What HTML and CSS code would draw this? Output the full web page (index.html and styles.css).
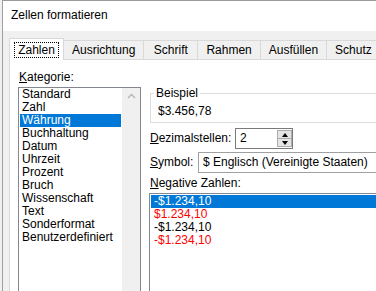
FILE: index.html
```html
<!DOCTYPE html>
<html lang="de">
<head>
  <meta charset="UTF-8" />
  <title>Zellen formatieren</title>
  <link rel="stylesheet" href="styles.css">
</head>
<body>
  <div class="dialog">
    <div class="titlebar">Zellen formatieren</div>

    <div class="dialog-body">
      <div class="tabs">
        <div class="tab active"><span class="focus">Zahlen</span></div>
        <div class="tab">Ausrichtung</div>
        <div class="tab">Schrift</div>
        <div class="tab">Rahmen</div>
        <div class="tab">Ausfüllen</div>
        <div class="tab">Schutz</div>
      </div>

      <div class="panel">
        <div class="category">
          <div class="label"><u>K</u>ategorie:</div>
          <div class="listbox cat-list">
            <ul class="items">
              <li>Standard</li>
              <li>Zahl</li>
              <li class="selected">Währung</li>
              <li>Buchhaltung</li>
              <li>Datum</li>
              <li>Uhrzeit</li>
              <li>Prozent</li>
              <li>Bruch</li>
              <li>Wissenschaft</li>
              <li>Text</li>
              <li>Sonderformat</li>
              <li>Benutzerdefiniert</li>
            </ul>
            <div class="scrollbar">
              <svg width="9" height="6" viewBox="0 0 9 6">
                <polyline points="1,5 4.5,1.5 8,5" fill="none" stroke="#b4b4b4" stroke-width="1.4" />
              </svg>
            </div>
          </div>
        </div>

        <div class="options">
          <fieldset class="sample">
            <legend>Beispiel</legend>
            <div class="sample-value">$3.456,78</div>
          </fieldset>

          <div class="field-row decimals">
            <label class="field-label"><u>D</u>ezimalstellen:</label>
            <div class="spin">
              <span class="spin-value">2</span>
              <span class="spin-buttons">
                <span class="spin-btn"><i class="arrow-up"></i></span>
                <span class="spin-btn"><i class="arrow-down"></i></span>
              </span>
            </div>
          </div>

          <div class="field-row symbol">
            <label class="field-label"><u>S</u>ymbol:</label>
            <div class="select">$ Englisch (Vereinigte Staaten)</div>
          </div>

          <div class="label neg-label"><u>N</u>egative Zahlen:</div>
          <ul class="listbox neg-list">
            <li class="selected">-$1.234,10</li>
            <li class="red">$1.234,10</li>
            <li>-$1.234,10</li>
            <li class="red">-$1.234,10</li>
          </ul>
        </div>
      </div>
    </div>
  </div>
</body>
</html>
```

FILE: styles.css
```css
/* Global */
body {
  margin: 0;
  background: #f0f0f0;
  font-family: "Liberation Sans", Arial, sans-serif;
  font-size: 12px;
  line-height: 15px;
  color: #000;
  overflow: hidden;
}

ul {
  list-style: none;
  margin: 0;
  padding: 0;
}

u {
  text-decoration: underline;
  text-underline-offset: 1px;
}

/* Window frame (the screenshot crops it on the right and bottom) */
.dialog {
  margin-left: 2px;
  width: 373px;
  height: 290px;
  overflow: hidden;
  border-left: 1px solid #a0a0a0;
  border-top: 1px solid #9a9a9a;
  background: #f0f0f0;
}

.titlebar {
  height: 30px;
  box-sizing: border-box;
  padding: 7px 0 0 8px;
  background: #fff;
}

.dialog-body {
  padding: 7px 0 0 6px;
}

/* Tabs */
.tabs {
  display: flex;
  align-items: flex-end;
}

.tab {
  flex-shrink: 0;
  min-width: 55px;
  box-sizing: border-box;
  margin-left: -1px;
  padding: 2px 8px 1px;
  border: 1px solid #d9d9d9;
  border-bottom: none;
  background: #f0f0f0;
  text-align: center;
  white-space: nowrap;
}

.tab:first-child {
  margin-left: 0;
}

.tab:last-child {
  min-width: 72px;
  text-align: left;
}

.tab.active {
  position: relative;
  z-index: 1;
  margin-bottom: -1px;
  padding: 4px 8px 2px;
  background: #fff;
}

.focus {
  padding: 0 3px;
  margin: 0 -3px;
  outline: 1px dotted #000;
}

/* Tab page */
.panel {
  display: flex;
  width: 420px;
  height: 260px;
  border: 1px solid #d9d9d9;
  background: #fff;
}

.category {
  padding: 10px 0 0 8px;
}

.label {
  padding-left: 1px;
}

.listbox {
  border: 1px solid #828790;
  background: #fff;
  line-height: 13px;
}

.cat-list {
  display: flex;
  width: 123px;
  height: 220px;
  box-sizing: border-box;
  margin-top: 2px;
}

.cat-list .items {
  flex: 1;
  padding: 0 1px;
}

.cat-list li {
  padding-left: 2px;
  white-space: nowrap;
}

.scrollbar {
  width: 18px;
  padding-top: 5px;
  display: flex;
  justify-content: center;
  align-items: flex-start;
  background: #f0f0f0;
}

.selected {
  background: #0078d7;
  color: #fff;
}

.red {
  color: #ff0000;
}

/* Right column */
.options {
  flex: 1;
  margin: 26px 0 0 9px;
}

.sample {
  margin: 0;
  min-width: 0;
  padding: 0 0 3px 3px;
  border: 1px solid #dcdcdc;
}

.sample legend {
  padding: 0 2px;
}

.sample-value {
  padding: 3px 0 0 4px;
}

.field-row {
  display: flex;
  align-items: center;
}

.decimals {
  margin-top: 5px;
}

.decimals .field-label {
  width: 85px;
}

.symbol {
  margin-top: 3px;
}

.symbol .field-label {
  width: 48px;
}

.spin {
  display: flex;
  width: 58px;
  height: 21px;
  box-sizing: border-box;
  border: 1px solid #7a7a7a;
  background: #fff;
}

.spin-value {
  flex: 1;
  padding-left: 4px;
  line-height: 19px;
}

.spin-buttons {
  display: flex;
  flex-direction: column;
  width: 15px;
  margin: 1px 0 1px;
}

.spin-btn {
  flex: 1;
  display: flex;
  align-items: center;
  justify-content: center;
  border: 1px solid #adadad;
  background: #e5e5e5;
}

.spin-btn + .spin-btn {
  border-top: none;
}

.arrow-up,
.arrow-down {
  width: 0;
  height: 0;
  border-left: 3px solid transparent;
  border-right: 3px solid transparent;
}

.arrow-up {
  border-bottom: 4px solid #000;
}

.arrow-down {
  border-top: 4px solid #000;
}

.select {
  flex: 1;
  height: 21px;
  box-sizing: border-box;
  padding-left: 4px;
  border: 1px solid #a0a0a0;
  background: #fff;
  line-height: 19px;
  white-space: nowrap;
}

.neg-label {
  margin-top: 3px;
  padding-left: 0;
}

.neg-list {
  height: 100px;
  margin: 2px 0 0 -1px;
  padding: 1px;
}

.neg-list li {
  padding-left: 3px;
}
```
